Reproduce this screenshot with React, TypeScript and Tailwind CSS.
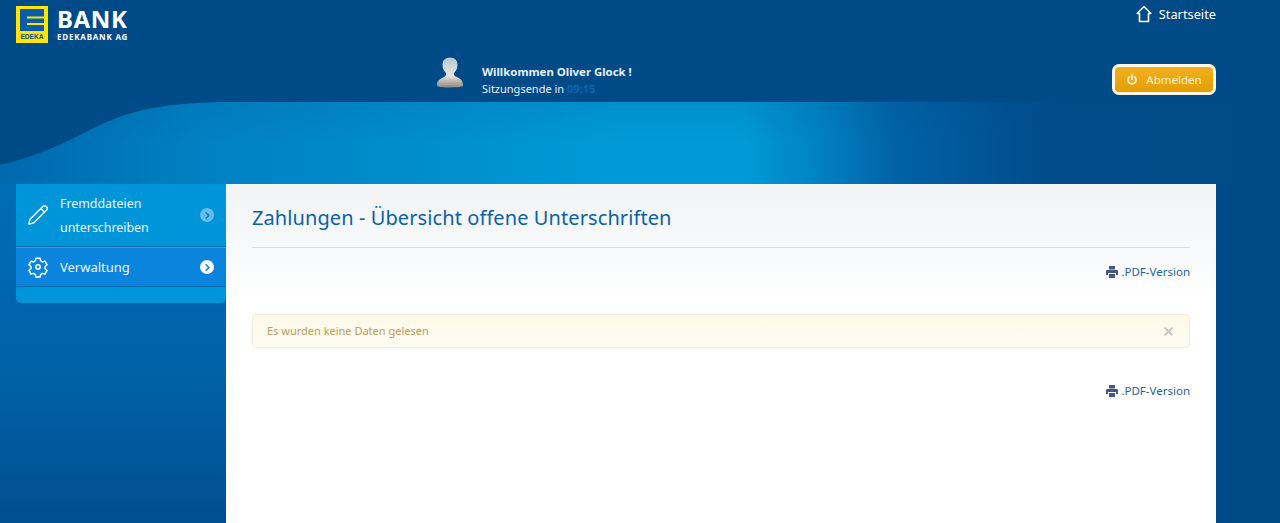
import { ChevronRight, Pencil, X } from "lucide-react";

const font = { fontFamily: '"Noto Sans", "Open Sans", sans-serif' };

const wavePath = "M0 165 C 40 156 72 139 100 125 C 135 108 175 102 235 102 L1280 102 L1280 184 L0 184 Z";

function Wave() {
  return (
    <svg className="absolute left-0 top-0" width="1280" height="523" viewBox="0 0 1280 523">
      <defs>
        <linearGradient id="glow" gradientUnits="userSpaceOnUse" x1="0" y1="0" x2="1280" y2="0">
          <stop offset="0" stopColor="#0068ae" />
          <stop offset="0.15" stopColor="#0080c2" />
          <stop offset="0.35" stopColor="#008fcf" />
          <stop offset="0.48" stopColor="#009ad8" />
          <stop offset="0.58" stopColor="#009ad8" />
          <stop offset="0.64" stopColor="#0082c2" />
          <stop offset="0.7" stopColor="#0062a6" />
          <stop offset="0.82" stopColor="#004c8a" />
          <stop offset="1" stopColor="#004a87" />
        </linearGradient>
        <linearGradient id="shade" x1="0" y1="0" x2="0" y2="1">
          <stop offset="0" stopColor="#004a87" stopOpacity="0.12" />
          <stop offset="0.5" stopColor="#004a87" stopOpacity="0" />
        </linearGradient>
        <linearGradient id="low" x1="0" y1="0" x2="0" y2="1">
          <stop offset="0" stopColor="#006db4" />
          <stop offset="0.55" stopColor="#0062a8" />
          <stop offset="1" stopColor="#004f8f" />
        </linearGradient>
      </defs>
      <path d={wavePath} fill="url(#glow)" />
      <path d={wavePath} fill="url(#shade)" />
      <rect x="0" y="184" width="226" height="339" fill="url(#low)" />
    </svg>
  );
}

function Logo() {
  return (
    <div className="flex items-start gap-[9px]">
      <svg width="32" height="37" viewBox="0 0 32 37" className="block">
        <rect width="32" height="37" fill="#ffe500" />
        <rect x="4" y="3" width="24" height="22" fill="#0a5ca8" />
        <rect x="11" y="10.5" width="17" height="2" fill="#ffe500" />
        <rect x="11" y="17" width="17" height="2" fill="#ffe500" />
        <text x="16" y="33" textAnchor="middle" fontSize="6.6" fontWeight="700" fill="#0a4f96" fontFamily="Liberation Sans, sans-serif">EDEKA</text>
      </svg>
      <div className="flex flex-col text-white">
        <span className="text-[24px] leading-[26px] font-bold tracking-[0.6px]">BANK</span>
        <span className="text-[8px] leading-[9px] font-bold tracking-[0.8px]">EDEKABANK AG</span>
      </div>
    </div>
  );
}

function Avatar() {
  return (
    <svg width="28" height="33" viewBox="0 0 30 34">
      <defs>
        <linearGradient id="skin" x1="0" y1="0" x2="0" y2="1">
          <stop offset="0" stopColor="#b9c6d0" />
          <stop offset="0.6" stopColor="#e8e4df" />
          <stop offset="1" stopColor="#8d8880" />
        </linearGradient>
      </defs>
      <path d="M15 1c5 0 8 3 8 8 0 4-2 7-4 9 0 2 1 3 4 4 4 2 6 4 6 9 0 1-2 2-14 2S1 32 1 30c0-4 3-6 7-8 2-1 3-2 3-4-2-2-4-5-4-9 0-5 3-8 8-8z" fill="url(#skin)" />
    </svg>
  );
}

function PdfLink({ className }: { className: string }) {
  return (
    <div className={`flex justify-end items-center gap-[3px] text-[11.5px] leading-[16px] text-[#1f63a3] ${className}`}>
      <svg width="12" height="12" viewBox="0 0 12 12" fill="#44587f">
        <path d="M3 0h6v3.5H3zM1.2 4h9.600c.7 0 1.200.5 1.200 1.200V9h-2V7H2v2H0V5.200C0 4.500.5 4 1.200 4zM3 8h6v4H3z" />
      </svg>
      <span>.PDF-Version</span>
    </div>
  );
}

export default function App() {
  return (
    <div className="relative w-[1280px] h-[523px] overflow-hidden bg-[#004a87]" style={font}>
      <Wave />
      <div className="relative flex flex-col pl-[16px] h-full w-[1216px]">
        {/* header */}
        <div className="flex h-[184px] shrink-0">
          <div className="pt-[6px] w-[420px]">
            <Logo />
          </div>
          <div className="flex items-start gap-[18px] pt-[56px] w-[676px]">
            <Avatar />
            <div className="text-[11.4px] leading-[17px] text-[#e8f1f8] pt-[7px]">
              <div className="font-bold">Willkommen Oliver Glock !</div>
              <div className="text-[11px]">
                Sitzungsende in <span className="text-[#0a66b4] font-bold">09:15</span>
              </div>
            </div>
          </div>
          <div className="flex flex-col items-end w-[104px] pt-[4px]">
            <div className="flex items-center gap-[7px] text-[12.8px] leading-[20px] text-white">
              <svg width="16" height="18" viewBox="0 0 16 18" fill="none" stroke="white" strokeWidth="1.6">
                <path d="M8 1.500 1.200 8.500h2.300v8h9v-8h2.300z" strokeLinejoin="round" />
              </svg>
              <span>Startseite</span>
            </div>
            <button className="mt-[40px] flex items-center justify-center gap-[8px] w-[104px] h-[31px] rounded-[7px] border-[3px] border-[#fff8e8] bg-gradient-to-b from-[#f2b01e] to-[#e59d00] text-[11.5px] text-[#fdf3d0]">
              <svg width="12" height="12" viewBox="0 0 12 12" fill="none" stroke="#fdf3d0" strokeWidth="1.8" strokeLinecap="round">
                <path d="M6 1v4.500M3.300 3a4 4 0 1 0 5.400 0" />
              </svg>
              <span>Abmelden</span>
            </button>
          </div>
        </div>

        {/* body */}
        <div className="flex flex-1 items-start">
          <nav className="w-[210px] h-[119px] bg-[#0095d9] rounded-b-[5px] text-[#eaf7fd]">
            <div className="flex items-center h-[63px] border-b border-[#0a6fb0] pl-[11px] pr-[12px]">
              <Pencil size={22} strokeWidth={1.5} className="text-white shrink-0" />
              <div className="ml-[11px] flex-1 pt-[1px] text-[12.4px] leading-[24px]">
                Fremddateien
                <br />
                unterschreiben
              </div>
              <span className="flex items-center justify-center w-[14px] h-[14px] rounded-full bg-[#66bde6]">
                <ChevronRight size={11} strokeWidth={3.5} className="text-[#0a82c4]" />
              </span>
            </div>
            <div className="flex items-center h-[40px] bg-[#0a84dc] border-t border-b border-t-[#25a3e6] border-b-[#0a6fb0] pl-[11px] pr-[12px]">
              <svg width="22" height="22" viewBox="0 0 24 24" fill="none" stroke="white" strokeWidth="1.6" strokeLinejoin="round" className="shrink-0">
                <path d="M9.700 2.500h4.600l.6 2.900 1.900 1.100 2.800-.9 2.300 4-2.200 2 0 2.200 2.200 2-2.300 4-2.800-.9-1.900 1.100-.6 2.900H9.700l-.6-2.900-1.900-1.100-2.800.9-2.300-4 2.200-2 0-2.200-2.200-2 2.300-4 2.800.9 1.900-1.100z" />
                <circle cx="12" cy="12" r="2.400" />
              </svg>
              <div className="ml-[11px] flex-1 text-[13px] pt-[1px]">Verwaltung</div>
              <span className="flex items-center justify-center w-[14px] h-[14px] rounded-full bg-white">
                <ChevronRight size={11} strokeWidth={3.5} className="text-[#0a84dc]" />
              </span>
            </div>
          </nav>

          <main className="flex-1 h-full bg-gradient-to-b from-[#f1f3f5] from-0% to-white to-[36%] px-[26px] pt-[19px]">
            <h1 className="text-[20px] leading-[30px] tracking-[0.09px] text-[#0a62a8] pb-[14px] border-b border-[#dcdcdc]">
              Zahlungen - Übersicht offene Unterschriften
            </h1>
            <PdfLink className="mt-[16px]" />
            <div className="mt-[34px] flex items-center justify-between h-[34px] rounded-[4px] border border-[#f3eedb] bg-gradient-to-b from-[#fdf9e8] to-[#fefcf2] pl-[14px] pr-[14px] text-[11px] text-[#bd9a5c]">
              <span>Es wurden keine Daten gelesen</span>
              <X size={13} strokeWidth={3.5} className="text-[#c4c4c0]" />
            </div>
            <PdfLink className="mt-[35px]" />
          </main>
        </div>
      </div>
    </div>
  );
}
